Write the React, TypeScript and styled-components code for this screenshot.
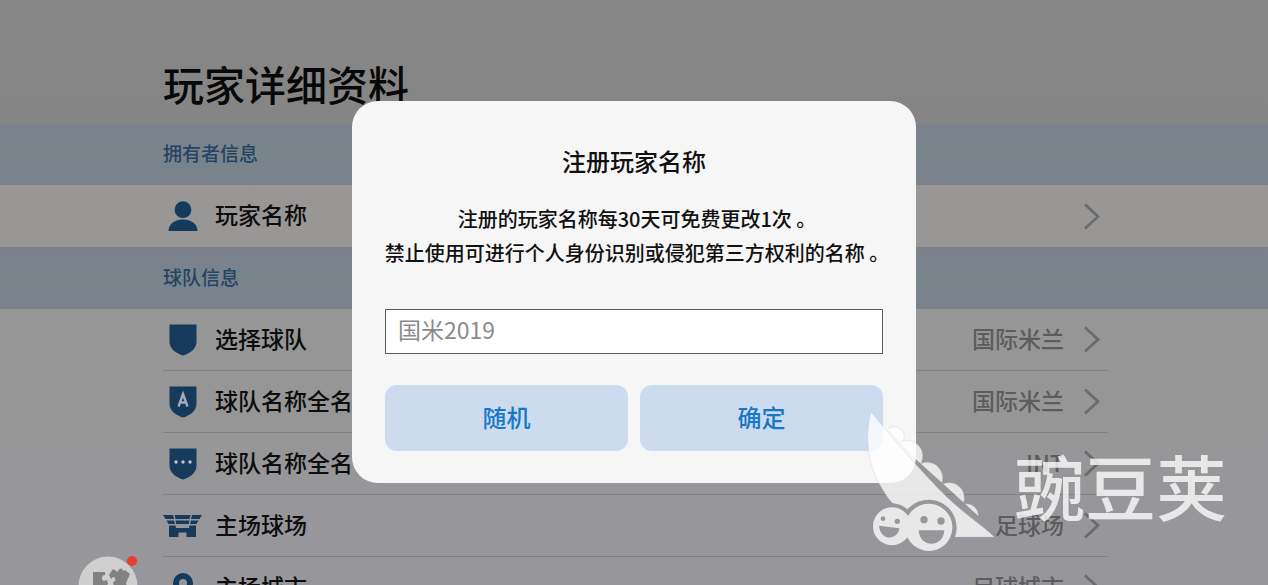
import React from "react";
import styled, { createGlobalStyle } from "styled-components";

const GlobalStyle = createGlobalStyle`
  * { box-sizing: border-box; }
  body {
    margin: 0;
    overflow: hidden;
    background: #979797;
    font-family: "Noto Sans CJK SC", sans-serif;
  }
`;

const Page = styled.main`
  height: 100vh;
  overflow: hidden;
  background: linear-gradient(#999796 200px, #969696 400px, #97969a 500px);
`;

const Header = styled.header`
  height: 123px;
  padding: 53px 160px 0 163px;
  background: linear-gradient(#868686, #858585);
`;

const Title = styled.h1`
  margin: 0;
  font-size: 41px;
  line-height: 60px;
  font-weight: 500;
  color: #080808;
`;

const SectionBand = styled.h2`
  margin: 0;
  height: 62px;
  padding: 0 160px 0 163px;
  background: linear-gradient(#7c818b, #79848b 50%, #7b828b);
  font-size: 19px;
  line-height: 60px;
  font-weight: 500;
  color: #254463;
`;

const List = styled.ul`
  list-style: none;
  margin: 0 160px 0 163px;
  padding: 0;
`;

const Item = styled.li<{ $divided: boolean }>`
  height: 62px;
  border-bottom: ${(p) => (p.$divided ? "1px solid #818181" : "none")};
`;

const RowButton = styled.button`
  display: flex;
  align-items: center;
  width: 100%;
  height: 100%;
  padding: 0 8px 0 0;
  border: 0;
  background: none;
  font: inherit;
  font-size: 23px;
  text-align: left;
  color: #0d0d0d;
`;

const IconSlot = styled.span`
  display: flex;
  justify-content: center;
  width: 39px;
  margin-right: 13px;
  color: #163a5b;
`;

const Label = styled.span`
  flex: 1;
  padding-bottom: 4px;
  font-weight: 500;
`;

const Value = styled.span`
  margin-right: 19px;
  padding-bottom: 4px;
  font-weight: 500;
  color: #5c5c5d;
`;

const Overlay = styled.div`
  position: fixed;
  inset: 0;
  display: flex;
  align-items: center;
  justify-content: center;
  padding-bottom: 2px;
`;

const Dialog = styled.form`
  width: 564px;
  padding: 42px 33px 32px;
  border-radius: 26px;
  background: #f6f6f6;
`;

const DialogTitle = styled.h2`
  margin: 0 0 23px;
  text-align: center;
  font-size: 24px;
  line-height: 36px;
  font-weight: 500;
  color: #111;
`;

const DialogText = styled.p`
  display: flex;
  flex-direction: column;
  align-items: center;
  margin: 0 0 39px;
  padding-left: 6px;
  font-size: 20px;
  line-height: 34px;
  font-weight: 500;
  white-space: nowrap;
  color: #111;
`;

const NameInput = styled.input`
  display: block;
  width: 100%;
  height: 45px;
  padding: 0 12px 4px;
  border: 1px solid #5c5c5c;
  border-radius: 0;
  outline: 0;
  background: #fff;
  font: inherit;
  font-size: 23px;
  color: #8b8b8b;
`;

const Actions = styled.div`
  display: grid;
  grid-template-columns: 1fr 1fr;
  gap: 12px;
  margin-top: 31px;
`;

const ActionButton = styled.button`
  height: 66px;
  padding: 0 0 3px;
  border: 0;
  border-radius: 12px;
  background: #ccdcee;
  font: inherit;
  font-size: 24px;
  font-weight: 500;
  color: #1878c8;
`;

const FloatingBadge = styled.button`
  position: fixed;
  left: 78px;
  bottom: -30px;
  width: 60px;
  height: 60px;
  padding: 0;
  border: 0;
  background: none;
`;

const Watermark = styled.div`
  position: fixed;
  right: 41px;
  bottom: 33px;
  display: flex;
  align-items: center;
  gap: 20px;
  opacity: 0.78;
  pointer-events: none;
`;

const Brand = styled.span`
  padding-top: 4px;
  font-size: 71px;
  line-height: 80px;
  font-weight: 500;
  color: #fff;
`;

const PersonIcon = () => (
  <svg width="30" height="30" viewBox="0 0 30 30" fill="currentColor">
    <circle cx="15" cy="8.7" r="8.4" />
    <path d="M.5 30C.8 22.500 7 18.500 15 18.500S29.200 22.500 29.500 30Z" />
  </svg>
);

const ShieldIcon = ({ mark }: { mark?: "letter" | "dots" }) => (
  <svg width="28" height="32" viewBox="0 0 28 32">
    <path d="M.5.500h27V18c0 7-7 11.500-13.500 13.500C7.500 29.500.5 25 .5 18Z" fill="currentColor" />
    {mark === "letter" && (
      <path d="M9.500 20.500 14 8l4.500 12.500M11 16.500h6" fill="none" stroke="#a5abb2" strokeWidth="2.400" />
    )}
    {mark === "dots" && (
      <g fill="#c2c6cb">
        <circle cx="7" cy="14" r="1.700" />
        <circle cx="14" cy="14" r="1.700" />
        <circle cx="21" cy="14" r="1.700" />
      </g>
    )}
  </svg>
);

const StadiumIcon = () => (
  <svg width="39" height="22" viewBox="0 0 39 22" fill="currentColor">
    <path d="M0 0h10l1 4H2.500ZM11.500 0h16l-1 4h-14ZM29 0h10l-2.500 4H28Z" />
    <path d="M3.500 5.500H11l1 3.500H5.500ZM12.500 5.500h14l-.8 3.500H13.300ZM28 5.500h7.500l-2 3.500H27Z" />
    <path d="M6 10.500h6.500l.5 2.500h13l.5-2.500H33V22h-9.500v-4.500h-8V22H6Z" />
  </svg>
);

const PinIcon = () => (
  <svg width="22" height="32" viewBox="0 0 22 32" fill="none" stroke="currentColor">
    <path d="M11 28C7 21 4 16 4 11a7 7 0 0 1 14 0C18 16 15 21 11 28Z" strokeWidth="6" />
  </svg>
);

const Chevron = () => (
  <svg width="17" height="27" viewBox="0 0 17 27" fill="none" stroke="#6b6b6b" strokeWidth="2.800">
    <path d="M2 1.500 15 13.500 2 25.500" />
  </svg>
);

const PuzzleBadge = () => (
  <svg width="60" height="60" viewBox="0 0 60 60">
    <circle cx="30" cy="31" r="29.500" fill="#cfcfcf" />
    <path
      d="M15 17h12v3c-4 0-4 5-1 6l3-1 1 4-4 4 2 7v6H15ZM31 20l4-6 5 3c0-4 5-5 5-1l2-1 5 4-4 9 3 13H36l-4-7 4-2-1-5c3 0 3-5 0-5l-2 2Z"
      fill="#818181"
    />
    <circle cx="54" cy="6" r="5" fill="#e83c2e" />
  </svg>
);

const PeaPodLogo = () => (
  <svg width="127" height="140" viewBox="50 38 381 420">
    <defs>
      <mask id="pod-mask" maskUnits="userSpaceOnUse" x="0" y="0" width="540" height="555">
        <rect width="540" height="555" fill="#fff" />
        <circle cx="125" cy="380" r="68" />
        <circle cx="235" cy="385" r="84" />
      </mask>
      <mask id="face-mask" maskUnits="userSpaceOnUse" x="0" y="0" width="540" height="555">
        <rect width="540" height="555" fill="#fff" />
        <circle cx="98" cy="358" r="7" />
        <circle cx="141" cy="366" r="8" />
        <path d="M86 379 147 387C143 424 90 426 86 379Z" />
        <circle cx="221" cy="361" r="11" />
        <circle cx="272" cy="365" r="11" />
        <path d="M205 393H282C279 447 208 447 205 393Z" />
      </mask>
      <clipPath id="pea-clip">
        <path d="M75 38 135 112 195 178 280 255 384 350H431V38Z" />
      </clipPath>
    </defs>
    <g fill="#fff">
      <path
        mask="url(#pod-mask)"
        stroke="#c4c4c4"
        strokeWidth="2"
        strokeOpacity="0.6"
        d="M62 38C45 105 48 190 92 262 115 300 130 325 165 330L300 413H431C405 385 350 350 300 303 245 252 150 145 62 38Z"
      />
      <g clipPath="url(#pea-clip)" stroke="#c4c4c4" strokeWidth="2" strokeOpacity="0.6">
        <circle cx="132" cy="112" r="30" />
        <circle cx="170" cy="170" r="47" />
        <circle cx="230" cy="236" r="47" />
        <circle cx="296" cy="296" r="46" />
        <circle cx="347" cy="350" r="37" />
      </g>
      <path
        mask="url(#face-mask)"
        d="M68 380a57 57 0 0 1 105-30A71 71 0 1 1 171 414 57 57 0 0 1 68 380Z"
      />
    </g>
  </svg>
);

type RowData = { icon: React.ReactNode; label: string; value?: string };

const ownerRows: RowData[] = [{ icon: <PersonIcon />, label: "玩家名称" }];

const teamRows: RowData[] = [
  { icon: <ShieldIcon />, label: "选择球队", value: "国际米兰" },
  { icon: <ShieldIcon mark="letter" />, label: "球队名称全名", value: "国际米兰" },
  { icon: <ShieldIcon mark="dots" />, label: "球队名称全名", value: "INT" },
  { icon: <StadiumIcon />, label: "主场球场", value: "足球场" },
  { icon: <PinIcon />, label: "主场城市", value: "足球城市" },
];

const Rows = ({ rows, divided = false }: { rows: RowData[]; divided?: boolean }) => (
  <List>
    {rows.map((row, i) => (
      <Item key={i} $divided={divided}>
        <RowButton type="button">
          <IconSlot>{row.icon}</IconSlot>
          <Label>{row.label}</Label>
          {row.value && <Value>{row.value}</Value>}
          <Chevron />
        </RowButton>
      </Item>
    ))}
  </List>
);

export default function App() {
  return (
    <>
      <GlobalStyle />
      <Page>
        <Header>
          <Title>玩家详细资料</Title>
        </Header>
        <SectionBand>拥有者信息</SectionBand>
        <Rows rows={ownerRows} />
        <SectionBand>球队信息</SectionBand>
        <Rows rows={teamRows} divided />
      </Page>
      <FloatingBadge type="button" aria-label="插件">
        <PuzzleBadge />
      </FloatingBadge>
      <Overlay>
        <Dialog role="dialog" aria-labelledby="dialog-title" onSubmit={(e) => e.preventDefault()}>
          <DialogTitle id="dialog-title">注册玩家名称</DialogTitle>
          <DialogText>
            <span>注册的玩家名称每30天可免费更改1次 。</span>
            <span>禁止使用可进行个人身份识别或侵犯第三方权利的名称 。</span>
          </DialogText>
          <NameInput type="text" aria-labelledby="dialog-title" defaultValue="国米2019" />
          <Actions>
            <ActionButton type="button">随机</ActionButton>
            <ActionButton type="submit">确定</ActionButton>
          </Actions>
        </Dialog>
      </Overlay>
      <Watermark>
        <PeaPodLogo />
        <Brand>豌豆荚</Brand>
      </Watermark>
    </>
  );
}
